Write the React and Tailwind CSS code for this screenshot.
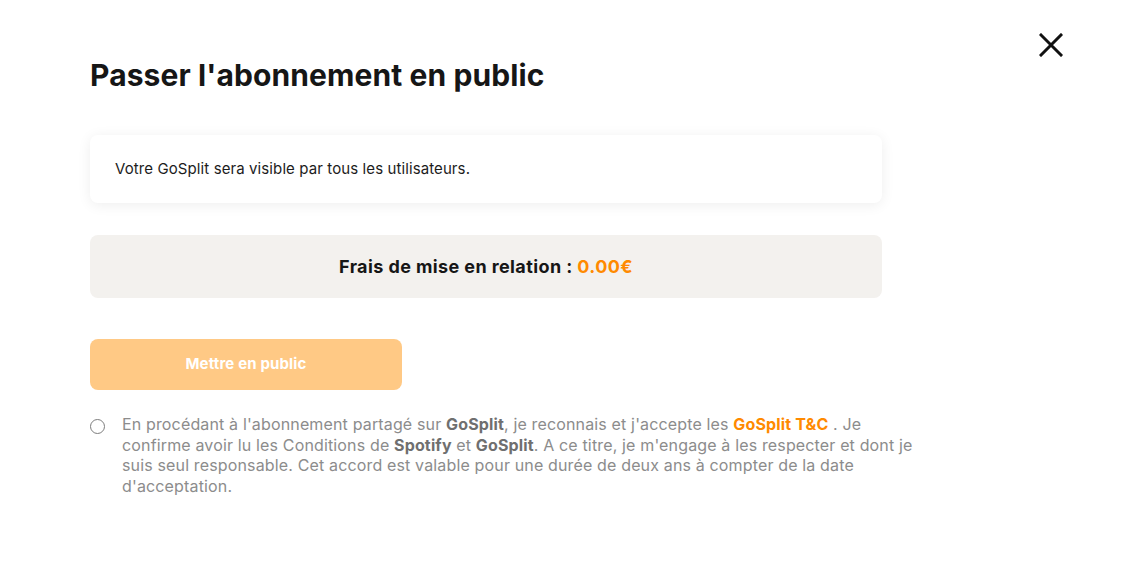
import React from 'react';

export default function App() {
  return (
    <div className="relative min-h-[570px] w-full bg-white font-['Inter',sans-serif] text-[#161616]">
      <button className="absolute right-[76px] top-[33px] p-0">
        <svg width="24" height="24" viewBox="0 0 24 24" fill="none" stroke="#111" strokeWidth="3" strokeLinecap="square">
          <path d="M2 2 L22 22 M22 2 L2 22" />
        </svg>
      </button>

      <div className="w-[792px] pl-[90px] pt-[56px] box-content">
        <h1 className="text-[30px] font-bold leading-[38px] tracking-[0.1px]">Passer l'abonnement en public</h1>

        <div className="mt-[41px] rounded-lg bg-white px-[25px] py-[23px] shadow-[0_2px_14px_rgba(0,0,0,0.07)]">
          <p className="text-[15px] leading-[22px] tracking-[0.1px] text-[#1c1c1c]">Votre GoSplit sera visible par tous les utilisateurs.</p>
        </div>

        <div className="mt-[32px] flex h-[63px] items-center justify-center rounded-lg bg-[#f3f1ee]">
          <p className="text-[18px] font-bold tracking-[0.4px]">
            Frais de mise en relation : <span className="text-[#ff8a00]">0.00€</span>
          </p>
        </div>

        <button className="mt-[41px] flex h-[51px] w-[312px] items-center justify-center rounded-lg bg-[#ffc985] text-[15px] font-bold tracking-[0.15px] text-white">
          Mettre en public
        </button>

        <div className="mt-[24px] flex items-start gap-[17px]">
          <span className="mt-[5px] h-[15px] w-[15px] shrink-0 rounded-full border-[1.5px] border-[#7d7d7d]" />
          <p className="w-[800px] shrink-0 text-[16px] leading-[20.5px] tracking-[0.15px] text-[#8c8c8c]">
            En procédant à l'abonnement partagé sur <b className="text-[#6f6f6f]">GoSplit</b>, je reconnais et j'accepte les{' '}
            <b className="text-[#ff8a00]">GoSplit T&amp;C</b> . Je confirme avoir lu les Conditions de{' '}
            <b className="text-[#6f6f6f]">Spotify</b> et <b className="text-[#6f6f6f]">GoSplit</b>. A ce titre, je m'engage à les respecter et dont je suis seul responsable. Cet accord est valable pour une durée de deux ans à compter de la date d'acceptation.
          </p>
        </div>
      </div>
    </div>
  );
}
